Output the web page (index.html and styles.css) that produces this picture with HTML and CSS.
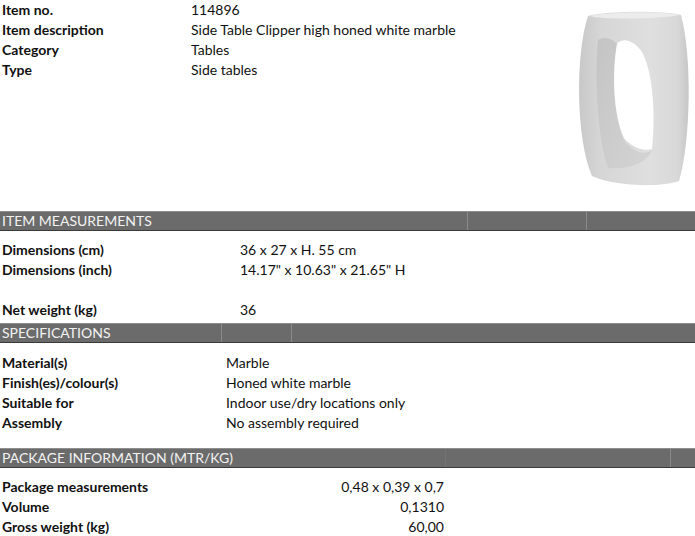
FILE: index.html
```html
<!DOCTYPE html>
<html>
<head>
<meta charset="utf-8">
<link rel="stylesheet" href="styles.css">
</head>
<body>
<div class="page">
  <div class="top">
    <div class="info">
      <div class="lbl">Item no.</div><div class="val">114896</div>
      <div class="lbl">Item description</div><div class="val">Side Table Clipper high honed white marble</div>
      <div class="lbl">Category</div><div class="val">Tables</div>
      <div class="lbl">Type</div><div class="val">Side tables</div>
    </div>
    <div class="photo">
      <svg width="125" height="205" viewBox="570 0 125 205" xmlns="http://www.w3.org/2000/svg">
        <defs>
          <linearGradient id="body" x1="0" y1="0" x2="1" y2="0">
            <stop offset="0" stop-color="#c8c8c8"/>
            <stop offset="0.2" stop-color="#d6d6d6"/>
            <stop offset="0.65" stop-color="#dfdfdf"/>
            <stop offset="0.9" stop-color="#d8d8d8"/>
            <stop offset="1" stop-color="#c6c6c6"/>
          </linearGradient>
          <linearGradient id="inner" x1="0" y1="0" x2="1" y2="1">
            <stop offset="0" stop-color="#c4c4c4"/>
            <stop offset="1" stop-color="#d4d4d4"/>
          </linearGradient>
        </defs>
        <path d="M588,16 C605,11 662,10 681,15 C692,55 691,140 679,181 C660,188 612,186 592,176 C576,140 575,55 588,16 Z" fill="url(#body)"/>
        <path d="M589,16 C605,12 662,11 680,15 C662,19 606,20 589,16 Z" fill="#ececec"/>
        <path d="M598,40 C604,36 612,38 617,44 C612,70 613,115 624,140 C632,152 645,156 652,150 C648,162 630,170 608,168 C598,140 594,80 598,40 Z" fill="url(#inner)"/>
        <path d="M617,44 C622,37 634,40 642,52 C652,70 656,110 652,149 C642,152 630,146 624,138 C613,115 612,72 617,44 Z" fill="#ffffff"/>
      </svg>
    </div>
  </div>

  <div class="bar bar1"><div class="cell">ITEM MEASUREMENTS</div><div class="cell"></div><div class="cell last"></div></div>
  <div class="rows rows-meas">
    <div class="lbl">Dimensions (cm)</div><div class="val">36 x 27 x H. 55 cm</div>
    <div class="lbl">Dimensions (inch)</div><div class="val">14.17" x 10.63" x 21.65" H</div>
    <div class="lbl blank"></div><div class="val blank"></div>
    <div class="lbl">Net weight (kg)</div><div class="val">36</div>
  </div>

  <div class="bar bar2"><div class="cell">SPECIFICATIONS</div><div class="cell"></div><div class="cell last"></div></div>
  <div class="rows rows-spec">
    <div class="lbl">Material(s)</div><div class="val">Marble</div>
    <div class="lbl">Finish(es)/colour(s)</div><div class="val">Honed white marble</div>
    <div class="lbl">Suitable for</div><div class="val">Indoor use/dry locations only</div>
    <div class="lbl">Assembly</div><div class="val">No assembly required</div>
  </div>

  <div class="bar bar3"><div class="cell">PACKAGE INFORMATION (MTR/KG)</div><div class="cell"></div><div class="cell last"></div></div>
  <div class="rows rows-pack">
    <div class="lbl">Package measurements</div><div class="val">0,48 x 0,39 x 0,7</div>
    <div class="lbl">Volume</div><div class="val">0,1310</div>
    <div class="lbl">Gross weight (kg)</div><div class="val">60,00</div>
  </div>
</div>
</body>
</html>
```

FILE: styles.css
```css
html, body {
  margin: 0;
  padding: 0;
  background: #ffffff;
}
body {
  font-family: Lato, "Liberation Sans", sans-serif;
  font-size: 14px;
  color: #111111;
  width: 695px;
  height: 536px;
  overflow: hidden;
}
.page {
  display: flex;
  flex-direction: column;
}
.top {
  display: flex;
  justify-content: space-between;
  height: 211px;
}
.info {
  display: grid;
  grid-template-columns: 189px 1fr;
  grid-auto-rows: 20px;
  align-content: start;
  padding-left: 2px;
}
.lbl {
  font-weight: 700;
  line-height: 20px;
  white-space: nowrap;
}
.val {
  line-height: 20px;
  white-space: nowrap;
}
.photo {
  width: 125px;
  height: 205px;
}
.photo svg {
  display: block;
}
.bar {
  display: flex;
  height: 18px;
  background: #6b6b6b;
  border-top: 1px solid #8e8e8e;
  border-bottom: 1px solid #3a3a3a;
  box-sizing: content-box;
  color: #f2f2f2;
}
.bar .cell {
  line-height: 18px;
  padding-left: 2px;
  border-right: 1px solid #8a8a8a;
  box-sizing: border-box;
  white-space: nowrap;
}
.bar .cell.last {
  flex: 1;
  border-right: none;
}
.bar1 .cell:nth-child(1) { width: 468px; }
.bar1 .cell:nth-child(2) { width: 119px; }
.bar2 { margin-top: 3px; }
.bar2 .cell:nth-child(1) { width: 222px; }
.bar2 .cell:nth-child(2) { width: 70px; }
.bar3 { margin-top: 15px; }
.bar3 .cell:nth-child(1) { width: 446px; border-right-color: #737373; }
.bar3 .cell:nth-child(2) { width: 225px; }
.rows {
  display: grid;
  grid-auto-rows: 20px;
  padding-left: 2px;
}
.rows-meas {
  grid-template-columns: 238px 1fr;
  padding-top: 9px;
}
.rows-spec {
  grid-template-columns: 224px 1fr;
  padding-top: 10px;
}
.rows-pack {
  grid-template-columns: 300px 142px;
  padding-top: 9px;
}
.rows-pack .val {
  text-align: right;
}
```
